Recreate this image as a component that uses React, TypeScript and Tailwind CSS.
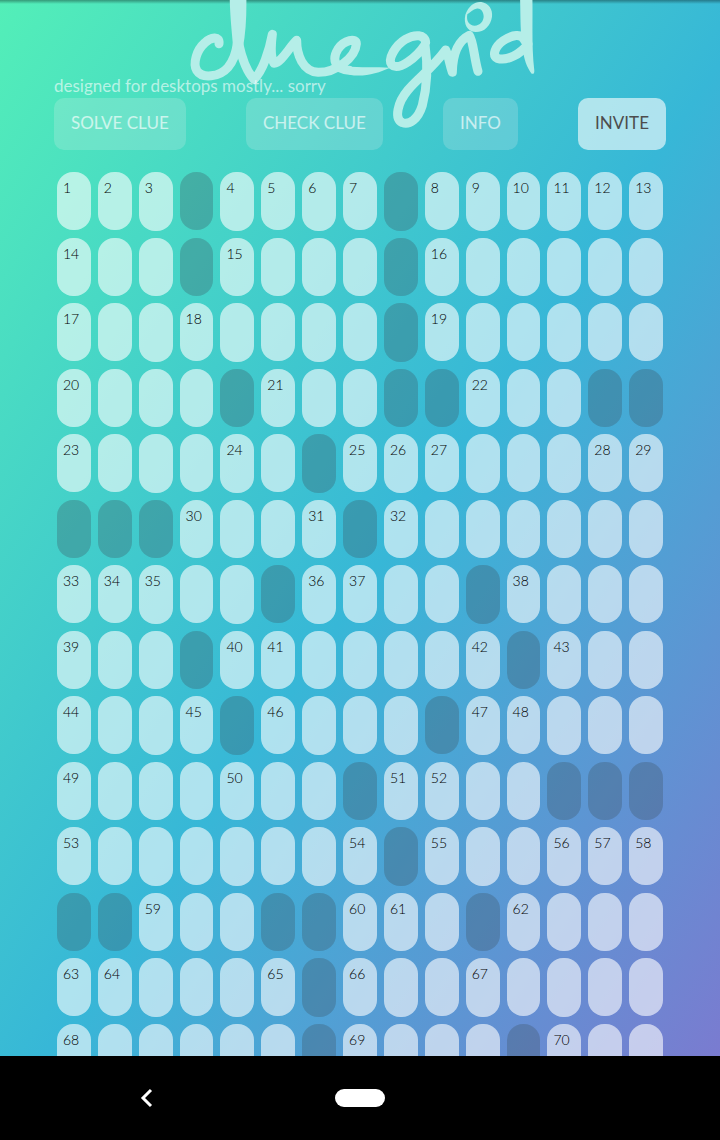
const GRID = [
  "1 2 3 # 4 5 6 7 # 8 9 10 11 12 13",
  "14 . . # 15 . . . # 16 . . . . .",
  "17 . . 18 . . . . # 19 . . . . .",
  "20 . . . # 21 . . # # 22 . . # #",
  "23 . . . 24 . # 25 26 27 . . . 28 29",
  "# # # 30 . . 31 # 32 . . . . . .",
  "33 34 35 . . # 36 37 . . # 38 . . .",
  "39 . . # 40 41 . . . . 42 # 43 . .",
  "44 . . 45 # 46 . . . # 47 48 . . .",
  "49 . . . 50 . . # 51 52 . . # # #",
  "53 . . . . . . 54 # 55 . . 56 57 58",
  "# # 59 . . # # 60 61 . # 62 . . .",
  "63 64 . . . 65 # 66 . . 67 . . . .",
  "68 . . . . . # 69 . . . # 70 . .",
].map((row) => row.split(" "));

function Logo() {
  return (
    <svg
      viewBox="0 0 1080 408"
      className="h-[136px] w-[360px] overflow-visible"
      role="img"
      aria-label="cluegrid"
    >
      <g fill="none" stroke="#b5eee8" strokeWidth="27" strokeLinecap="round" strokeLinejoin="round">
        <path d="M117 131 C120 106 92 112 74 129 C50 150 38 190 50 211 C66 237 118 232 144 202 C160 183 168 160 172 130" />
        <path d="M176 130 C186 176 199 214 222 238 C248 214 268 152 277 103 C272 142 272 172 282 190 C304 188 326 144 350 121 C350 164 368 214 414 217 C466 218 526 174 529 132 C530 112 492 120 474 147 C456 176 462 206 508 211" />
        <path d="M737 128 C736 102 704 102 676 118 C646 136 622 178 635 194 C656 214 710 172 735 134 C744 196 740 266 727 316 C714 358 688 376 667 368 C642 356 652 308 684 270 C716 232 756 206 797 150 C806 168 808 190 817 217 C818 168 832 124 868 106 C880 122 882 172 894 214" />
        <path d="M1034 122 C1026 98 996 104 970 122 C944 140 936 166 952 175 C982 184 1022 162 1044 132" />
      </g>
      <g fill="#b5eee8">
        <path d="M149 -12 C150 50 156 100 160 148 L188 148 C198 96 200 40 199 -12 Z" />
        <path d="M496 199 C540 204 590 201 630 203 C594 220 550 232 508 224 Z" />
        <path d="M1020 -12 C1022 50 1020 96 1028 140 C1030 176 1042 204 1055 221 Q1063 224 1063 212 C1054 140 1059 60 1057 -12 Z" />
        <path
          fillRule="evenodd"
          d="M856 44 C866 16 886 4 904 6 C926 10 939 28 936 50 C932 78 912 97 886 96 C862 94 850 72 856 44 Z M862 43 C858 64 868 77 884 77 C900 77 911 64 911 49 C910 32 900 23 889 26 C880 28 870 36 862 43 Z"
        />
      </g>
    </svg>
  );
}

function Cell({ value }: { value: string }) {
  if (value === "#") {
    return <div className="aspect-[11/19] rounded-2xl bg-[#3a4f5c]/30" />;
  }
  return (
    <label className="relative block aspect-[11/19]">
      {value !== "." && (
        <span className="pointer-events-none absolute top-2 left-1.5 text-sm leading-4 font-light text-black">
          {value}
        </span>
      )}
      <input
        aria-label={value === "." ? "Letter" : `Letter ${value}`}
        maxLength={1}
        className="block h-full w-full rounded-2xl bg-white/60 text-center outline-none"
      />
    </label>
  );
}

const button = "h-[52px] rounded-[10px] px-[17px] pb-0.5 text-[17px]";
const ghost = "bg-[#eeeeee]/20 text-white/65";

export default function App() {
  return (
    <div className="flex h-screen flex-col overflow-hidden bg-black font-[Lato,sans-serif]">
      <main className="min-h-0 flex-1 overflow-hidden bg-linear-to-br/srgb from-[#53efb8] via-[#37b7d7] via-53% to-[#7a7bd0]">
        <div className="h-1 bg-linear-to-b from-black/35 to-transparent" />
        <div className="mx-auto w-[85%]">
          <header className="relative h-[94px]">
            <h1 className="absolute -top-1 left-1/2 -translate-x-1/2">
              <Logo />
            </h1>
            <p className="absolute bottom-0 left-0 text-[17px] leading-6 text-white/60">
              designed for desktops mostly... sorry
            </p>
          </header>
          <nav className="relative flex justify-between">
            <button className={`${button} ${ghost}`}>SOLVE CLUE</button>
            <button className={`${button} ${ghost}`}>CHECK CLUE</button>
            <button className={`${button} ${ghost}`}>INFO</button>
            <button className={`${button} bg-white/60 text-[#4d4d4d]`}>INVITE</button>
          </nav>
          <div className="mt-[22px] grid grid-cols-15 gap-[7px] px-[3px]">
            {GRID.flat().map((value, i) => (
              <Cell key={i} value={value} />
            ))}
          </div>
        </div>
      </main>
      <footer className="flex h-[84px] items-center justify-center bg-black">
        <div className="grid w-full grid-cols-5 items-center">
          <button aria-label="Back" className="col-start-2 -ml-1 justify-self-start">
            <svg viewBox="0 0 20 20" className="size-5" fill="none" stroke="white" strokeWidth="3">
              <path d="M11 2 L3 10 L11 18" />
            </svg>
          </button>
          <button aria-label="Home" className="h-[18px] w-[50px] justify-self-center rounded-full bg-white" />
        </div>
      </footer>
    </div>
  );
}
